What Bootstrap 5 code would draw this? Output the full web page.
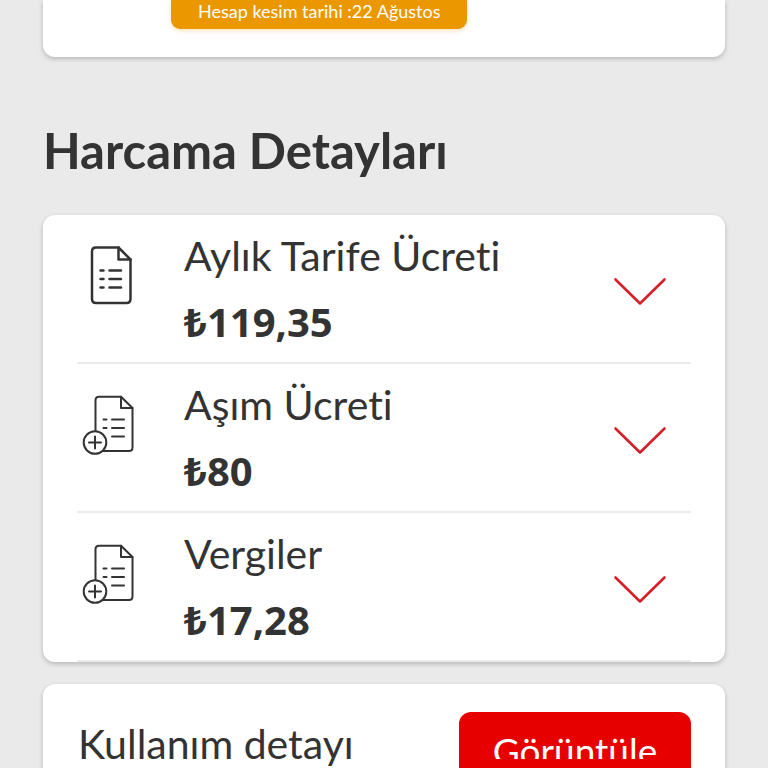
<!DOCTYPE html>
<html lang="tr">
<head>
<meta charset="utf-8">
<meta name="viewport" content="width=device-width, initial-scale=1">
<title>Harcama Detayları</title>
<link rel="stylesheet" href="https://cdn.jsdelivr.net/npm/bootstrap@5.3.0/dist/css/bootstrap.min.css">
<style>
  body { background: #eaeaea; color: #333; font-family: Lato, "Noto Sans", sans-serif; font-variant-ligatures: none; }
  .page { padding: 0 43px 24px; }
  .panel { background: #fff; border: 0; border-radius: 12px; box-shadow: 0 2px 5px rgba(0, 0, 0, .22); }
  .panel-top { border-radius: 0 0 12px 12px; padding: 0 128px 28px; }
  .due-date { background: #eb9700; color: #fff; border-radius: 0 0 9px 9px; padding: 0 27px 7px; font-size: 18px; line-height: 22px; box-shadow: 0 2px 4px rgba(235, 151, 0, .25); }
  .page-title { margin: 63px 0 35px; font-size: 49px; line-height: 60px; font-weight: 700; }
  .expenses { padding: 0 34px; }
  .expense { border-bottom: 2px solid #ebebeb; padding: 9px 24px 6px 5px; }
  .expense-icon { width: 56px; height: 64px; margin: 20px 46px 0 0; }
  .label-text { font-size: 41px; line-height: 64px; }
  .amount { font-family: "Noto Sans", sans-serif; font-size: 40px; line-height: 68px; font-weight: 700; }
  .toggle { padding: 4px 0 0; line-height: 0; border: 0; }
  .usage { margin-top: 22px; padding: 28px 34px 28px 35px; }
  .view-btn { background: #e60000; color: #fff; border: 0; border-radius: 12px; width: 232px; height: 72px; padding: 9px 0 0; font-size: 37px; line-height: 60px; }
  .view-btn:hover { background: #c40000; color: #fff; }
  .view-btn span { height: 38px; }
</style>
</head>
<body>
<svg class="d-none" xmlns="http://www.w3.org/2000/svg">
  <symbol id="doc" viewBox="0 0 56 64">
    <g fill="none" stroke="#333" stroke-width="2.5" stroke-linejoin="round" stroke-linecap="round">
      <path d="M36.500 3.500H14q-4 0-4 4V55q0 4 4 4H44.500q4 0 4-4V15.500z"/>
      <path d="M36.500 3.500V15.500H48.500"/>
      <path d="M18.500 26.500h3M27.500 26.500h11.500M18.500 35h3M27.500 35h11.500M18.500 43.500h3M27.500 43.500h11.500"/>
    </g>
  </symbol>
  <symbol id="doc-plus" viewBox="0 0 56 64">
    <g fill="none" stroke="#333" stroke-width="2" stroke-linejoin="round" stroke-linecap="round">
      <path d="M39 3.700H17q-3.500 0-3.500 3.500V54.500q0 3.500 3.500 3.500H47q3.500 0 3.500-3.500V15z"/>
      <path d="M39 3.700V15H50.500"/>
      <path d="M21.500 26.500h3M30 26.500h12M21.500 35h3M30 35h12M30 43.500h12"/>
      <circle cx="13" cy="49.500" r="11.300" fill="#fff"/>
      <path d="M7 49.500h12M13 43.500v12"/>
    </g>
  </symbol>
  <symbol id="chevron" viewBox="0 0 54 30">
    <path d="M2.500 2.500L27 26.500L51.500 2.500" fill="none" stroke="#d5202a" stroke-width="2.600" stroke-linecap="round" stroke-linejoin="round"/>
  </symbol>
</svg>

<main class="page">
  <section class="panel panel-top d-flex">
    <div class="due-date text-nowrap">Hesap kesim tarihi :22 Ağustos</div>
  </section>

  <h1 class="page-title">Harcama Detayları</h1>

  <section class="panel expenses">
    <div class="expense d-flex align-items-center">
      <svg class="expense-icon flex-shrink-0 align-self-start" aria-hidden="true"><use href="#doc"/></svg>
      <div class="flex-grow-1">
        <div class="label-text">Aylık Tarife Ücreti</div>
        <div class="amount">₺119,35</div>
      </div>
      <button type="button" class="btn toggle" aria-label="Aylık Tarife Ücreti"><svg width="54" height="30"><use href="#chevron"/></svg></button>
    </div>
    <div class="expense d-flex align-items-center">
      <svg class="expense-icon flex-shrink-0 align-self-start" aria-hidden="true"><use href="#doc-plus"/></svg>
      <div class="flex-grow-1">
        <div class="label-text">Aşım Ücreti</div>
        <div class="amount">₺80</div>
      </div>
      <button type="button" class="btn toggle" aria-label="Aşım Ücreti"><svg width="54" height="30"><use href="#chevron"/></svg></button>
    </div>
    <div class="expense d-flex align-items-center">
      <svg class="expense-icon flex-shrink-0 align-self-start" aria-hidden="true"><use href="#doc-plus"/></svg>
      <div class="flex-grow-1">
        <div class="label-text">Vergiler</div>
        <div class="amount">₺17,28</div>
      </div>
      <button type="button" class="btn toggle" aria-label="Vergiler"><svg width="54" height="30"><use href="#chevron"/></svg></button>
    </div>
  </section>

  <section class="panel usage d-flex justify-content-between align-items-start">
    <div class="label-text">Kullanım detayı</div>
    <button type="button" class="btn view-btn d-flex justify-content-center align-items-start"><span class="d-block overflow-hidden">Görüntüle</span></button>
  </section>
</main>
<script src="https://cdn.jsdelivr.net/npm/bootstrap@5.3.0/dist/js/bootstrap.bundle.min.js"></script>
</body>
</html>
